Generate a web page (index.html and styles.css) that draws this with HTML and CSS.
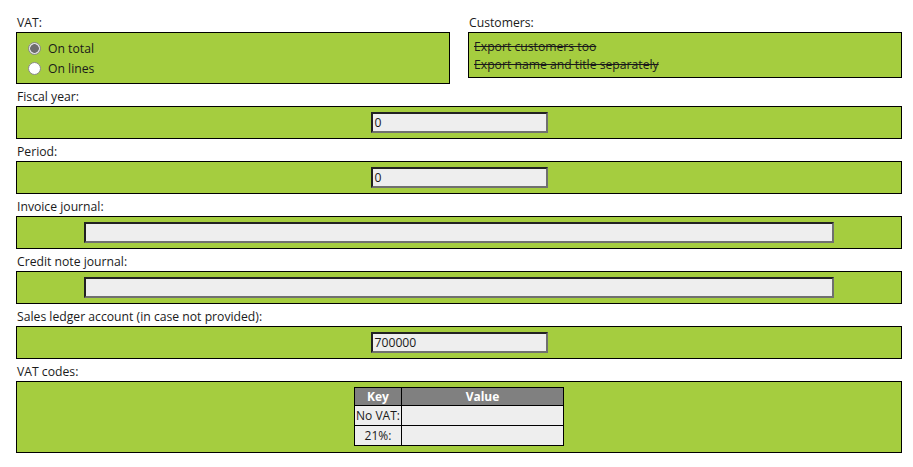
FILE: index.html
```html
<!DOCTYPE html>
<html>
<head>
<meta charset="utf-8">
<link rel="stylesheet" href="styles.css">
</head>
<body>
<div class="page">
  <div class="top-row">
    <div class="col">
      <div class="label">VAT:</div>
      <div class="box box-radios">
        <div class="radio-row"><span class="radio checked"></span><span>On total</span></div>
        <div class="radio-row"><span class="radio"></span><span>On lines</span></div>
      </div>
    </div>
    <div class="col">
      <div class="label">Customers:</div>
      <div class="box box-checks">
        <div class="strike">Export customers too</div>
        <div class="strike">Export name and title separately</div>
      </div>
    </div>
  </div>

  <div class="label">Fiscal year:</div>
  <div class="box box-center"><div class="field small">0</div></div>

  <div class="label">Period:</div>
  <div class="box box-center"><div class="field small">0</div></div>

  <div class="label">Invoice journal:</div>
  <div class="box box-center"><div class="field wide"></div></div>

  <div class="label">Credit note journal:</div>
  <div class="box box-center"><div class="field wide"></div></div>

  <div class="label">Sales ledger account (in case not provided):</div>
  <div class="box box-center"><div class="field small">700000</div></div>

  <div class="label">VAT codes:</div>
  <div class="box box-table">
    <table class="codes">
      <thead>
        <tr><th class="key">Key</th><th class="val">Value</th></tr>
      </thead>
      <tbody>
        <tr><td class="key">No VAT:</td><td class="val"></td></tr>
        <tr><td class="key">21%:</td><td class="val"></td></tr>
      </tbody>
    </table>
  </div>
</div>
</body>
</html>
```
FILE: styles.css
```css
html, body {
  margin: 0;
  padding: 0;
  background: #ffffff;
}
body {
  font-family: "Open Sans", "Noto Sans", sans-serif;
  font-size: 12.2px;
  color: #1a1a1a;
}
.page {
  padding: 10px 11px 0 16px;
}
.top-row {
  display: grid;
  grid-template-columns: 434px 434px;
  column-gap: 18px;
  align-items: start;
}
.label {
  height: 22px;
  box-sizing: border-box;
  padding: 5px 0 0 1px;
  line-height: 16px;
}
.box {
  background: #a5cd3f;
  border: 1px solid #000;
}
.box-radios {
  height: 52px;
  box-sizing: border-box;
  padding: 5px 0 5px 11px;
}
.radio-row {
  display: flex;
  align-items: center;
  height: 20px;
  gap: 7px;
}
.radio {
  width: 11px;
  height: 11px;
  border-radius: 50%;
  border: 1px solid #8a8a8a;
  background: #fff;
  box-sizing: content-box;
}
.radio.checked {
  background: radial-gradient(circle, #6d6d6d 0 4px, #e4e4e4 4.6px);
}
.box-checks {
  height: 46px;
  box-sizing: border-box;
  padding: 5px 0 3px 5px;
}
.strike {
  line-height: 18px;
  text-decoration: line-through;
}
.box-center {
  height: 33px;
  box-sizing: border-box;
  display: flex;
  align-items: center;
  justify-content: center;
}
.field {
  height: 21px;
  box-sizing: border-box;
  background: #eeeeee;
  border-style: solid;
  border-width: 2px;
  border-color: #222 #707070 #707070 #222;
  line-height: 17px;
  padding-left: 2px;
  color: #1a1a1a;
}
.field.small {
  width: 177px;
}
.field.wide {
  width: 750px;
}
.box-table {
  height: 72px;
  box-sizing: border-box;
  display: flex;
  justify-content: center;
  align-items: flex-start;
  padding-top: 5px;
}
.codes {
  border-collapse: collapse;
  font-size: 12px;
}
.codes th, .codes td {
  border: 1px solid #000;
  padding: 0 1px;
  text-align: center;
  white-space: nowrap;
}
.codes th {
  background: #808080;
  color: #fff;
  font-weight: bold;
  height: 17px;
  line-height: 16px;
}
.codes td {
  background: #eeeeee;
  height: 19px;
  line-height: 18px;
}
.codes .key {
  width: 44px;
}
.codes .val {
  width: 159px;
}
```
